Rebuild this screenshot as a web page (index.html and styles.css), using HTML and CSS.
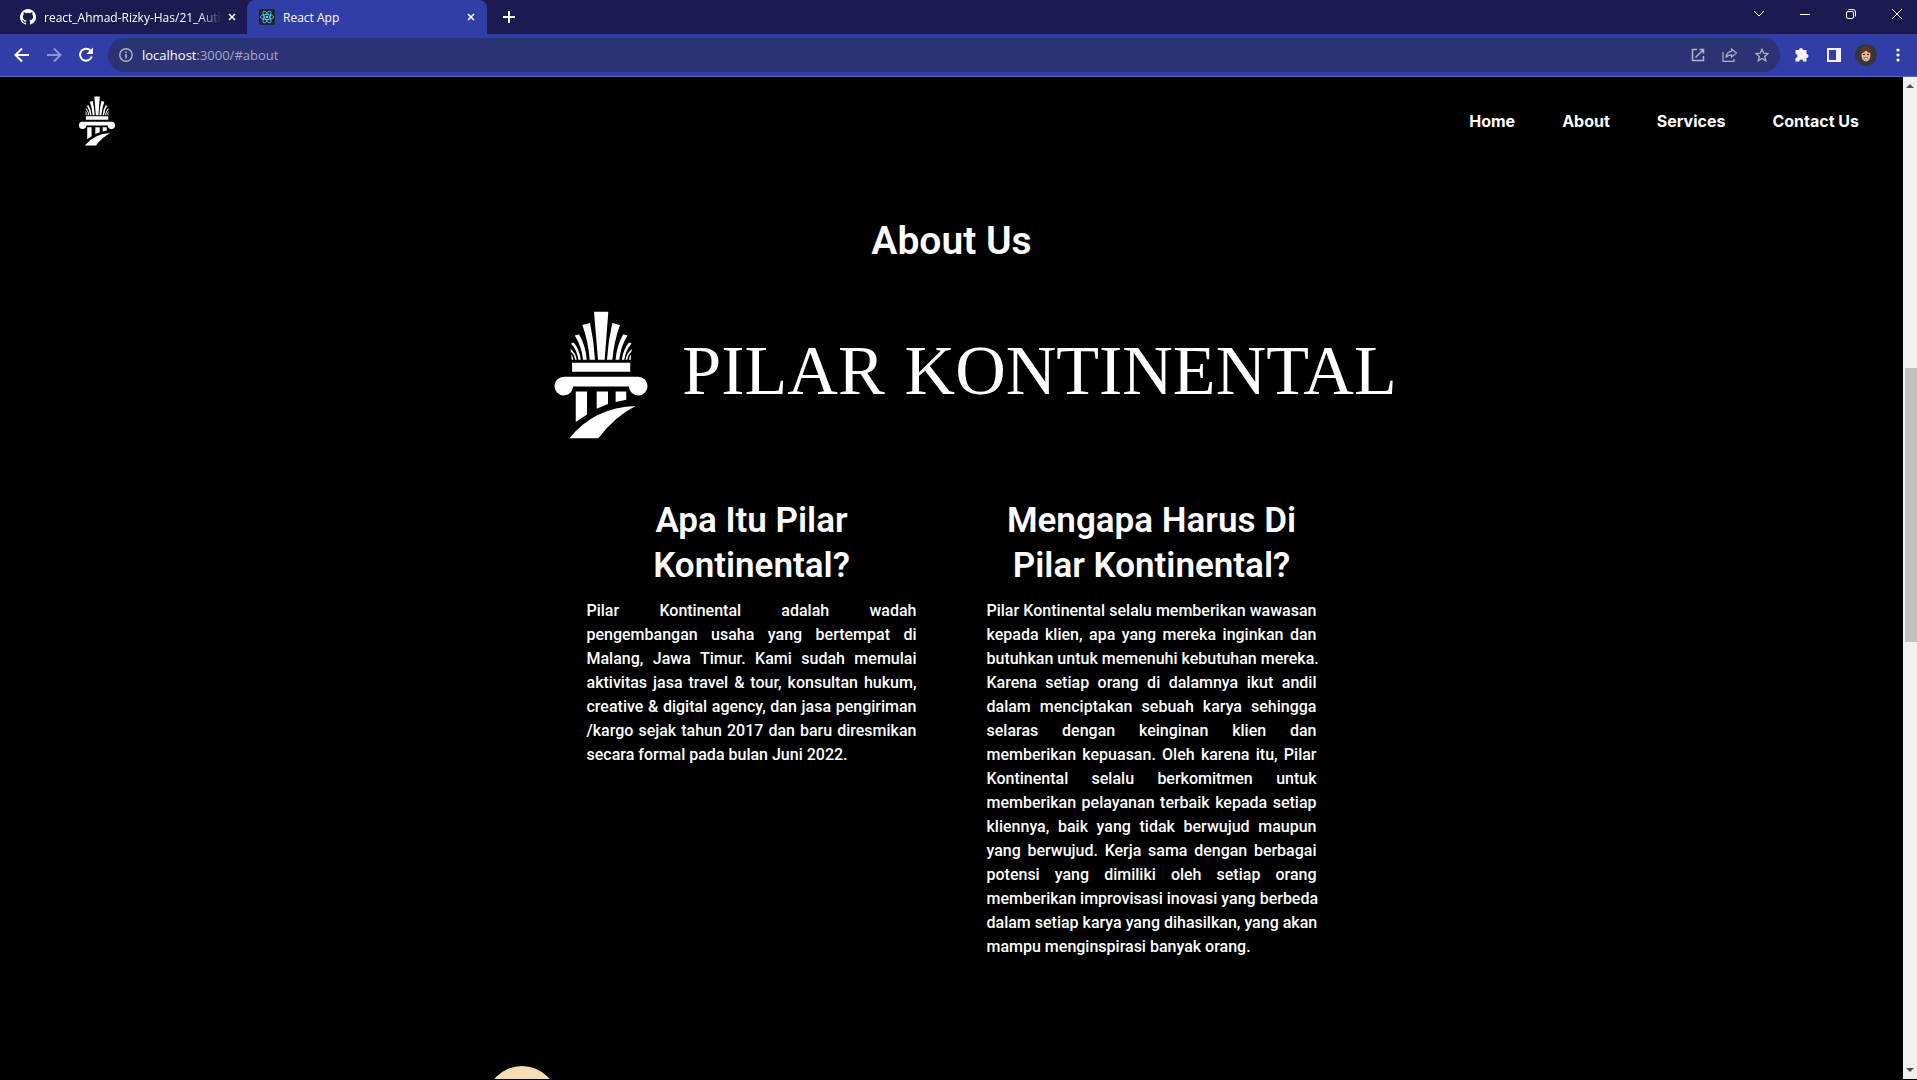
FILE: index.html
```html
<!DOCTYPE html>
<html lang="id">
<head>
<meta charset="utf-8">
<title>React App</title>
<link rel="stylesheet" href="styles.css">
</head>
<body>
<svg class="defs" width="0" height="0" aria-hidden="true">
  <symbol id="pillar" viewBox="45 62 280 385">
    <path d="M164 64h43l-11 145h-20zM129 104l23-6q12 55 15 111h-16q-4-55-22-105zM242 104l-23-6q-13 55-16 111h16q5-55 23-105zM106 136l13-4q20 34 23 77h-11q-5-43-25-73zM265 136l-13-4q-20 34-23 77h11q5-43 25-73zM95 160l8-3q18 22 21 52h-7q-4-29-22-49zM277 160l-8-3q-18 22-21 52h7q4-29 22-49zM94 176q15 13 18 33h-5q-2-16-13-25zM277 176q-15 13-18 33h5q2-16 13-25zM95 192q6 7 7 17h-5zM276 192q-6 7-7 17h5z"/>
    <path d="M98 218h175v27H98zM74 260h222a28 28 0 1 1-27 29H101a28 28 0 1 1-27-29zM109 304h34v69l-34 23zM172 304h34v38l-34 14zM229 304h32v25l-32 7z"/>
    <path d="M90 445Q165 352 289 348 226 380 177 445z"/>
  </symbol>
</svg>

<header class="browser">
  <div class="tabstrip">
    <div class="tab tab-github">
      <svg class="favicon" viewBox="0 0 16 16" fill="#fff"><path d="M8 0a8 8 0 0 0-2.53 15.59c.4.07.55-.17.55-.38v-1.49c-2.01.37-2.53-.49-2.69-.94-.09-.23-.48-.94-.82-1.13-.28-.15-.68-.52-.01-.53.63-.01 1.08.58 1.23.82.72 1.21 1.87.87 2.33.66.07-.52.28-.87.51-1.07-1.78-.2-3.64-.89-3.64-3.95 0-.87.31-1.59.82-2.15-.08-.2-.36-1.02.08-2.12 0 0 .67-.21 2.2.82a7.6 7.6 0 0 1 4 0c1.53-1.04 2.2-.82 2.2-.82.44 1.1.16 1.92.08 2.12.51.56.82 1.27.82 2.15 0 3.07-1.87 3.75-3.65 3.95.29.25.54.73.54 1.48v2.2c0 .21.15.46.55.38A8 8 0 0 0 8 0z"/></svg>
      <span class="tab-title">react_Ahmad-Rizky-Has/21_Auth</span>
      <button class="icon-button tab-close" aria-label="Close tab"><svg width="8" height="8" viewBox="0 0 8 8" class="line close-x"><path d="M1 1l6 6M7 1L1 7"/></svg></button>
    </div>
    <div class="tab tab-active">
      <svg class="favicon" viewBox="0 0 16 16"><rect width="16" height="16" rx="2" fill="#20232a"/><g fill="none" stroke="#5bd3f3" stroke-width=".8"><ellipse cx="8" cy="8" rx="6.6" ry="2.6"/><ellipse cx="8" cy="8" rx="6.6" ry="2.6" transform="rotate(60 8 8)"/><ellipse cx="8" cy="8" rx="6.6" ry="2.6" transform="rotate(120 8 8)"/></g><circle cx="8" cy="8" r="1.3" fill="#5bd3f3"/></svg>
      <span class="tab-title">React App</span>
      <button class="icon-button tab-close" aria-label="Close tab"><svg width="8" height="8" viewBox="0 0 8 8" class="line close-x"><path d="M1 1l6 6M7 1L1 7"/></svg></button>
    </div>
    <button class="icon-button new-tab" aria-label="New tab"><svg width="12" height="12" viewBox="0 0 12 12" class="line bold"><path d="M6 0v12M0 6h12"/></svg></button>
    <div class="window-buttons">
      <button class="icon-button" aria-label="Search tabs"><svg width="12" height="12" viewBox="0 0 12 12" class="line"><path d="M1 3l5 5 5-5"/></svg></button>
      <button class="icon-button" aria-label="Minimize"><svg width="12" height="12" viewBox="0 0 12 12" class="line"><path d="M1 6.500h10"/></svg></button>
      <button class="icon-button" aria-label="Restore"><svg width="12" height="12" viewBox="0 0 12 12" class="line"><rect x="1.500" y="3.500" width="7" height="7" rx="1.500"/><path d="M3.500 1.500h4.500a2.500 2.500 0 0 1 2.500 2.500v4.500"/></svg></button>
      <button class="icon-button" aria-label="Close"><svg width="12" height="12" viewBox="0 0 12 12" class="line"><path d="M1 1l10 10M11 1L1 11"/></svg></button>
    </div>
  </div>
  <div class="toolbar">
    <button class="icon-button nav-button" aria-label="Back"><svg width="16" height="16" viewBox="0 0 16 16" class="line bold"><path d="M15 8H2M8 1.500L1.500 8 8 14.500"/></svg></button>
    <button class="icon-button nav-button dim" aria-label="Forward"><svg width="16" height="16" viewBox="0 0 16 16" class="line bold"><path d="M1 8h13M8 1.500L14.500 8 8 14.500"/></svg></button>
    <button class="icon-button nav-button" aria-label="Reload"><svg width="16" height="16" viewBox="0 0 16 16"><path d="M13 4.200A6 6 0 1 0 13.800 9.500" fill="none" stroke="#fff" stroke-width="2"/><path d="M15 .5v6.500H8.500z" fill="#fff"/></svg></button>
    <div class="omnibox">
      <svg width="14" height="14" viewBox="0 0 14 14" class="line muted"><circle cx="7" cy="7" r="6.200" stroke-width="1.400"/><path d="M7 6v4.500M7 3.500V5" stroke-width="1.600"/></svg>
      <a class="address" href="#about"><span class="host">localhost</span>:3000/#about</a>
      <button class="icon-button" aria-label="Open in app"><svg width="14" height="14" viewBox="0 0 14 14" class="line muted thick"><path d="M6 1.500H1.500v11h11V8M8.500 1.500h4v4M12.500 1.500L4.500 9.500"/></svg></button>
      <button class="icon-button" aria-label="Share"><svg width="16" height="14" viewBox="0 0 16 14" class="line muted"><path d="M1 4v9.300h11V11M9.500 1l5 4-5 4V6.800C7 6.800 5 7.800 4 9.800 4 6 6.500 3.500 9.500 3.300z" stroke-width="1.200"/></svg></button>
      <button class="icon-button" aria-label="Bookmark"><svg width="14" height="14" viewBox="0 0 14 14" class="line muted"><path d="M7 1.200l1.700 4 4.300.4-3.300 2.800 1 4.300L7 10.400l-3.700 2.300 1-4.300L1 5.600l4.300-.4z" stroke-width="1.300"/></svg></button>
    </div>
    <div class="extensions">
      <button class="icon-button" aria-label="Extensions"><svg width="16" height="16" viewBox="0 0 16 16"><path fill="#f1f3f8" d="M1.500 3H5a2 2 0 1 1 4 0h3.500v4a2 2 0 1 1 0 4v3.500H9.200a2 2 0 0 0-4 0H1.500V11a2 2 0 0 0 0-4z"/></svg></button>
      <button class="icon-button" aria-label="Side panel"><svg width="14" height="14" viewBox="0 0 14 14"><path fill="#f1f3f8" fill-rule="evenodd" d="M0 0h14v14H0zM2 2v10h7V2z"/></svg></button>
      <button class="icon-button" aria-label="Profile"><svg width="22" height="22" viewBox="0 0 22 22"><circle cx="11" cy="11" r="11" fill="#35363a"/><path d="M6 10Q4 4 8 3.500q2-2 5-.5 4 1 3 7z" fill="#5a3626"/><ellipse cx="11" cy="11.500" rx="4.500" ry="6" fill="#e9b492"/><path d="M6.500 9q2.500 0 4.500-2.500Q13 9 15.500 9 15 4.500 11 4.500T6.500 9z" fill="#5a3626"/><path d="M8 10.500h2M12 10.500h2" stroke="#35231b"/><path d="M9 13.500h4q-.5 2.500-2 2.500t-2-2.500z" fill="#fff" stroke="#9b4c3b" stroke-width=".6"/></svg></button>
      <button class="icon-button" aria-label="Menu"><svg width="4" height="14" viewBox="0 0 4 14" fill="#fff"><circle cx="2" cy="2" r="1.600"/><circle cx="2" cy="7" r="1.600"/><circle cx="2" cy="12" r="1.600"/></svg></button>
    </div>
  </div>
</header>

<div class="viewport">
  <div class="page">
    <nav class="navbar">
      <a class="brand" href="#home" aria-label="Pilar Kontinental"><svg width="36" height="50" fill="#fff"><use href="#pillar"/></svg></a>
      <div class="links">
        <a href="#home">Home</a>
        <a href="#about">About</a>
        <a href="#services">Services</a>
        <a href="#contact">Contact Us</a>
      </div>
    </nav>
    <main class="about">
      <h1>About Us</h1>
      <div class="logo">
        <svg width="94" height="128" fill="#fff"><use href="#pillar"/></svg>
        <span class="wordmark"><span>PILAR</span><span>KONTINENTAL</span></span>
      </div>
      <div class="columns">
        <section>
          <h2>Apa Itu Pilar Kontinental?</h2>
          <p>Pilar Kontinental adalah wadah pengembangan usaha yang bertempat di Malang, Jawa Timur. Kami sudah memulai aktivitas jasa travel &amp; tour, konsultan hukum, creative &amp; digital agency, dan jasa pengiriman /kargo sejak tahun 2017 dan baru diresmikan secara formal pada bulan Juni 2022.</p>
        </section>
        <section>
          <h2>Mengapa Harus Di Pilar Kontinental?</h2>
          <p>Pilar Kontinental selalu memberikan wawasan kepada klien, apa yang mereka inginkan dan <span class="keep">butuhkan untuk memenuhi kebutuhan mereka.</span> Karena setiap orang di dalamnya ikut andil dalam menciptakan sebuah karya sehingga selaras dengan keinginan klien dan memberikan kepuasan. Oleh karena itu, Pilar Kontinental selalu berkomitmen untuk memberikan pelayanan terbaik kepada setiap kliennya, baik yang tidak berwujud maupun yang berwujud. Kerja sama dengan berbagai potensi yang dimiliki oleh setiap orang <span class="keep">memberikan improvisasi inovasi yang berbeda</span> <span class="keep">dalam setiap karya yang dihasilkan, yang akan</span> mampu menginspirasi banyak orang.</p>
        </section>
      </div>
      <div class="next-section"><div class="dot"></div></div>
    </main>
  </div>
  <div class="scrollbar" aria-hidden="true">
    <svg width="8" height="4" viewBox="0 0 8 4"><path d="M4 0l4 4H0z" fill="#505050"/></svg>
    <div class="track"><div class="thumb"></div></div>
    <svg width="8" height="4" viewBox="0 0 8 4"><path d="M0 0h8L4 4z" fill="#505050"/></svg>
  </div>
</div>
</body>
</html>
```
FILE: styles.css
```css
* { box-sizing: border-box; }
body {
  margin: 0;
  height: 100vh;
  display: flex;
  flex-direction: column;
  overflow: hidden;
  background: #000;
  color: #fff;
  font-family: Roboto, "Liberation Sans", sans-serif;
}
a { color: inherit; text-decoration: none; }
svg { display: block; flex: none; }
.defs { position: absolute; }
.icon-button {
  display: flex;
  align-items: center;
  justify-content: center;
  padding: 0;
  border: 0;
  background: none;
  color: #fff;
}
.line { fill: none; stroke: #fff; stroke-width: 1; }
.bold { stroke-width: 2; }
.close-x { stroke-width: 1.5; }
.muted { stroke: #b0b4c8; }
.thick { stroke-width: 1.5; }
.dim { opacity: .45; }

/* Browser chrome */
.browser {
  flex: none;
  background: #323ea8;
  border-bottom: 1px solid #5964ba;
  font-family: "Open Sans", "Noto Sans", sans-serif;
}
.tabstrip {
  display: flex;
  height: 34px;
  background: #1c1a50;
}
.tab {
  display: flex;
  align-items: center;
  gap: 8px;
  font-size: 12px;
}
.tab-github { width: 247px; padding: 0 9px 0 20px; }
.tab-github .tab-close { margin-left: -8px; }
.tab-active {
  width: 240px;
  padding: 0 10px 0 12px;
  border-radius: 8px 8px 0 0;
  background: #323ea8;
}
.favicon { width: 16px; height: 16px; }
.tab-title {
  flex: 1;
  white-space: nowrap;
}
.tab-github .tab-title {
  -webkit-mask-image: linear-gradient(to right, #000 154px, transparent 178px);
  mask-image: linear-gradient(to right, #000 154px, transparent 178px);
}
.tab-close { width: 12px; height: 16px; }
.new-tab { width: 44px; }
.window-buttons {
  display: flex;
  gap: 34px;
  margin-left: auto;
  padding-right: 14px;
}
.window-buttons .icon-button { width: 12px; height: 28px; }
.toolbar {
  display: flex;
  align-items: center;
  height: 42px;
  padding: 0 3px 0 6px;
}
.nav-button { width: 32px; height: 32px; }
.omnibox {
  flex: 1;
  display: flex;
  align-items: center;
  height: 34px;
  margin-left: 6px;
  padding: 0 10px 0 11px;
  border-radius: 17px;
  background: #2b3374;
}
.address {
  flex: 1;
  margin-left: 9px;
  color: #a5a9c6;
  font-size: 13px;
}
.host { color: #fff; }
.omnibox .icon-button { width: 32px; height: 32px; }
.omnibox .icon-button:last-child { width: 16px; margin-left: 8px; }
.extensions { display: flex; align-items: center; margin-left: 6px; }
.extensions .icon-button { width: 32px; height: 32px; }

/* Page */
.viewport {
  flex: 1;
  min-height: 0;
  display: flex;
  margin-bottom: 1px;
}
.page { flex: 1; overflow: hidden; }
.navbar {
  display: flex;
  align-items: center;
  justify-content: space-between;
  height: 88px;
  padding: 0 44px 0 79px;
}
.links {
  display: flex;
  gap: 47px;
  font-family: Inter, sans-serif;
  font-size: 16px;
  font-weight: 700;
}
.about { max-width: 932px; margin: 0 auto; }
h1 {
  margin: 51px 0 45px;
  font-size: 39px;
  line-height: 50px;
  font-weight: 600;
  text-align: center;
}
.logo {
  display: flex;
  align-items: center;
  justify-content: center;
  gap: 34px;
  padding-left: 48px;
}
.wordmark {
  display: flex;
  gap: 20px;
  padding-bottom: 8px;
  font-family: "Liberation Serif", serif;
  font-size: 70px;
  line-height: 120px;
}
.columns {
  display: flex;
  justify-content: center;
  gap: 70px;
  margin-top: 59px;
}
.columns section { width: 330px; }
h2 {
  margin: 0 0 11px;
  font-size: 35px;
  line-height: 45px;
  font-weight: 600;
  text-align: center;
}
p {
  margin: 0;
  font-size: 16px;
  line-height: 24px;
  font-weight: 500;
  text-align: justify;
}
.keep { white-space: nowrap; }
.next-section { padding-top: 107px; }
.dot {
  width: 72px;
  height: 72px;
  border-radius: 50%;
  background: #f5deb3;
}
.scrollbar {
  display: flex;
  flex-direction: column;
  align-items: center;
  width: 14px;
  padding: 7px 0 7px;
  background: #f1f1f1;
}
.track {
  flex: 1;
  align-self: stretch;
  display: grid;
  grid-template-rows: 274fr 274fr 420fr;
  margin: 6px 0;
  padding-left: 2px;
}
.thumb { grid-row: 2; background: #c1c1c1; }
```
